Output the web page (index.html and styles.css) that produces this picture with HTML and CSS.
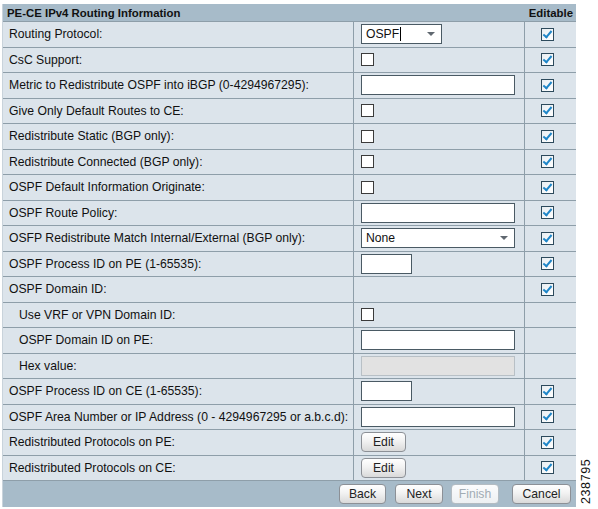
FILE: index.html
```html
<!DOCTYPE html>
<html>
<head>
<meta charset="utf-8">
<link rel="stylesheet" href="styles.css">
</head>
<body>
<div class="page">
  <div class="panel">
    <div class="head">
      <div class="head-title">PE-CE IPv4 Routing Information</div>
      <div class="head-edit">Editable</div>
    </div>

    <div class="row"><div class="lbl">Routing Protocol:</div><div class="ctl"><div class="select short"><span class="val">OSPF<span class="caret"></span></span><span class="arrow"></span></div></div><div class="ed"><span class="cb on"></span></div></div>
    <div class="row"><div class="lbl">CsC Support:</div><div class="ctl"><span class="box"></span></div><div class="ed"><span class="cb on"></span></div></div>
    <div class="row"><div class="lbl">Metric to Redistribute OSPF into iBGP (0-4294967295):</div><div class="ctl"><span class="text wide"></span></div><div class="ed"><span class="cb on"></span></div></div>
    <div class="row"><div class="lbl">Give Only Default Routes to CE:</div><div class="ctl"><span class="box"></span></div><div class="ed"><span class="cb on"></span></div></div>
    <div class="row"><div class="lbl">Redistribute Static (BGP only):</div><div class="ctl"><span class="box"></span></div><div class="ed"><span class="cb on"></span></div></div>
    <div class="row"><div class="lbl">Redistribute Connected (BGP only):</div><div class="ctl"><span class="box"></span></div><div class="ed"><span class="cb on"></span></div></div>
    <div class="row"><div class="lbl">OSPF Default Information Originate:</div><div class="ctl"><span class="box"></span></div><div class="ed"><span class="cb on"></span></div></div>
    <div class="row"><div class="lbl">OSPF Route Policy:</div><div class="ctl"><span class="text wide"></span></div><div class="ed"><span class="cb on"></span></div></div>
    <div class="row"><div class="lbl">OSFP Redistribute Match Internal/External (BGP only):</div><div class="ctl"><div class="select wide"><span class="val">None</span><span class="arrow"></span></div></div><div class="ed"><span class="cb on"></span></div></div>
    <div class="row"><div class="lbl">OSPF Process ID on PE (1-65535):</div><div class="ctl"><span class="text small"></span></div><div class="ed"><span class="cb on"></span></div></div>
    <div class="row"><div class="lbl">OSPF Domain ID:</div><div class="ctl"></div><div class="ed"><span class="cb on"></span></div></div>
    <div class="row"><div class="lbl indent">Use VRF or VPN Domain ID:</div><div class="ctl"><span class="box"></span></div><div class="ed"></div></div>
    <div class="row"><div class="lbl indent">OSPF Domain ID on PE:</div><div class="ctl"><span class="text wide"></span></div><div class="ed"></div></div>
    <div class="row"><div class="lbl indent">Hex value:</div><div class="ctl"><span class="text wide disabled"></span></div><div class="ed"></div></div>
    <div class="row"><div class="lbl">OSPF Process ID on CE (1-65535):</div><div class="ctl"><span class="text small"></span></div><div class="ed"><span class="cb on"></span></div></div>
    <div class="row"><div class="lbl">OSPF Area Number or IP Address (0 - 4294967295 or a.b.c.d):</div><div class="ctl"><span class="text wide"></span></div><div class="ed"><span class="cb on"></span></div></div>
    <div class="row"><div class="lbl">Redistributed Protocols on PE:</div><div class="ctl"><span class="btn edit">Edit</span></div><div class="ed"><span class="cb on"></span></div></div>
    <div class="row"><div class="lbl">Redistributed Protocols on CE:</div><div class="ctl"><span class="btn edit">Edit</span></div><div class="ed"><span class="cb on"></span></div></div>

    <div class="foot">
      <span class="btn back">Back</span>
      <span class="btn next">Next</span>
      <span class="btn finish disabled">Finish</span>
      <span class="btn cancel">Cancel</span>
    </div>
  </div>
  <div class="side"><span class="fig">238795</span></div>
</div>
</body>
</html>
```

FILE: styles.css
```css
html, body {
  margin: 0;
  padding: 0;
  background: #ffffff;
}
body {
  font-family: "Liberation Sans", Arial, sans-serif;
  font-size: 12.2px;
  color: #111;
}
.page {
  display: flex;
  padding-top: 4px;
  padding-left: 2px;
}
.panel {
  width: 574px;
  border-left: 1px solid #c9d3db;
  background: #dce4eb;
}
.head {
  height: 18px;
  background: #a7bbc9;
  display: flex;
  align-items: center;
  justify-content: space-between;
  font-weight: bold;
  font-size: 11.4px;
  border-bottom: 1px solid #8e9ea9;
  box-sizing: border-box;
}
.head-title { padding-left: 4px; }
.head-edit { padding-right: 3px; }

.row {
  display: grid;
  grid-template-columns: 351px 171px 51px;
  height: 25.5px;
  box-sizing: border-box;
  border-bottom: 1px solid #8e9ea9;
}
.lbl, .ctl, .ed {
  display: flex;
  align-items: center;
}
.lbl {
  padding-left: 6px;
  border-right: 1px solid #8e9ea9;
  white-space: nowrap;
}
.lbl.indent { padding-left: 16px; }
.ctl {
  padding-left: 7px;
  border-right: 1px solid #8e9ea9;
}
.ed {
  justify-content: center;
  padding-right: 6px;
}

.box {
  width: 11px;
  height: 11px;
  border: 1px solid #3b3b3b;
  background: #fff;
}
.cb {
  width: 11px;
  height: 11px;
  border: 1px solid #2d4a5c;
  background: linear-gradient(135deg, #e8eef2, #ffffff);
  position: relative;
}
.cb.on::after {
  content: "";
  position: absolute;
  left: 3px;
  top: 0px;
  width: 3px;
  height: 7px;
  border-right: 2px solid #1f86c8;
  border-bottom: 2px solid #1f86c8;
  transform: rotate(40deg);
}

.text {
  height: 18px;
  border: 1px solid #4a5a64;
  background: #fff;
  box-sizing: content-box;
}
.text.wide { width: 152px; }
.text.small { width: 49px; }
.text.disabled {
  background: #e2e2e2;
  border-color: #b8c0c6;
}

.select {
  height: 18px;
  border: 1px solid #4a5a64;
  background: #fff;
  display: flex;
  align-items: center;
  justify-content: space-between;
  box-sizing: content-box;
}
.select.short { width: 79px; }
.select.wide { width: 152px; }
.select .val {
  padding-left: 4px;
  font-size: 12.2px;
  display: flex;
  align-items: center;
}
.caret {
  display: inline-block;
  width: 1px;
  height: 14px;
  background: #000;
  margin-left: 1px;
}
.select .arrow {
  width: 0;
  height: 0;
  border-left: 4px solid transparent;
  border-right: 4px solid transparent;
  border-top: 4px solid #606870;
  margin-right: 6px;
}

.btn {
  display: inline-flex;
  align-items: center;
  justify-content: center;
  height: 18px;
  border: 1px solid #8c9096;
  border-radius: 4px;
  background: linear-gradient(#ffffff, #f2f2f2 45%, #d9d9d9);
  font-size: 12.2px;
  color: #222;
  box-sizing: content-box;
}
.btn.edit { width: 43px; }

.foot {
  height: 26px;
  background: #a7bbc9;
  display: flex;
  align-items: center;
  padding-left: 336px;
}
.btn.back { width: 45px; }
.btn.next { width: 46px; margin-left: 9px; }
.btn.finish { width: 46px; margin-left: 8px; }
.btn.cancel { width: 57px; margin-left: 13px; }
.btn.disabled {
  color: #a2acb4;
  border-color: #b4bcc2;
  background: linear-gradient(#fbfcfd, #edf0f2);
}

.side {
  width: 22px;
  position: relative;
}
.fig {
  position: absolute;
  left: 3px;
  top: 500px;
  transform-origin: 0 0;
  transform: rotate(-90deg);
  font-size: 12.5px;
  letter-spacing: 0.6px;
  color: #111;
  white-space: nowrap;
}
```
